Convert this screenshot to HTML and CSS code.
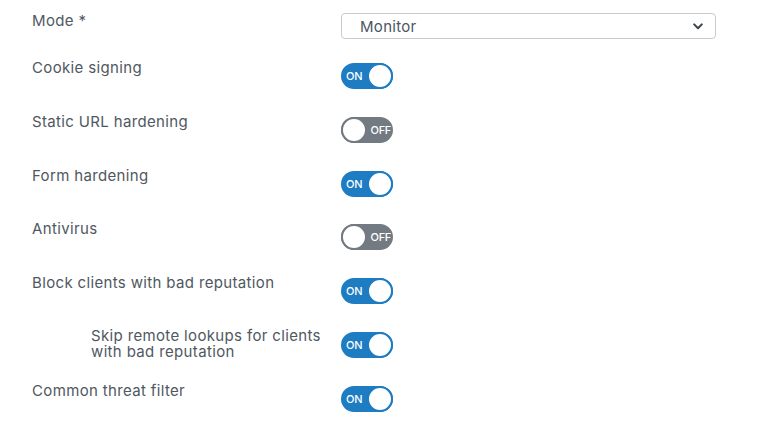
FILE: index.html
```html
<!DOCTYPE html>
<html lang="en">
<head>
<meta charset="utf-8">
<title>Settings</title>
<link rel="stylesheet" href="styles.css">
</head>
<body>
<div class="form">
  <div class="row row-mode">
    <div class="label">Mode *</div>
    <div class="select">
      <span class="select-text">Monitor</span>
      <svg class="chev" width="10" height="7" viewBox="0 0 10 7"><path d="M1.2 1.4 L5 5.2 L8.8 1.4" fill="none" stroke="#3b424a" stroke-width="2" stroke-linecap="round" stroke-linejoin="round"/></svg>
    </div>
  </div>
  <div class="row">
    <div class="label">Cookie signing</div>
    <div class="toggle on"><span class="tt">ON</span><span class="knob"></span></div>
  </div>
  <div class="row">
    <div class="label">Static URL hardening</div>
    <div class="toggle off"><span class="knob"></span><span class="tt">OFF</span></div>
  </div>
  <div class="row">
    <div class="label">Form hardening</div>
    <div class="toggle on"><span class="tt">ON</span><span class="knob"></span></div>
  </div>
  <div class="row">
    <div class="label">Antivirus</div>
    <div class="toggle off"><span class="knob"></span><span class="tt">OFF</span></div>
  </div>
  <div class="row">
    <div class="label">Block clients with bad reputation</div>
    <div class="toggle on"><span class="tt">ON</span><span class="knob"></span></div>
  </div>
  <div class="row">
    <div class="label sub">Skip remote lookups for clients with bad reputation</div>
    <div class="toggle on"><span class="tt">ON</span><span class="knob"></span></div>
  </div>
  <div class="row">
    <div class="label">Common threat filter</div>
    <div class="toggle on"><span class="tt">ON</span><span class="knob"></span></div>
  </div>
</div>
</body>
</html>
```
FILE: styles.css
```css
* { box-sizing: border-box; }
html, body { margin: 0; padding: 0; background: #ffffff; }
body {
  font-family: Inter, Roboto, "Liberation Sans", sans-serif;
  color: #4f5861;
  width: 757px;
  height: 426px;
  overflow: hidden;
}
.form { padding: 12px 0 0 32px; }
.row {
  display: grid;
  grid-template-columns: 309px 375px;
  height: 53.8px;
  align-items: start;
}
.row-mode { height: 47px; }
.label { font-size: 15px; line-height: 18px; letter-spacing: 0.35px; }
.label.sub { padding-left: 59px; padding-right: 12px; line-height: 16px; }
.select {
  margin-top: 1px;
  height: 26px;
  border: 1px solid #c6cbd1;
  border-radius: 4px;
  display: flex;
  align-items: center;
  justify-content: space-between;
  padding: 0 12px 0 18px;
}
.select-text { font-size: 15px; color: #4c5663; letter-spacing: 0.3px; }
.chev { display: block; }
.toggle {
  margin-top: 4px;
  width: 52px;
  height: 26px;
  border-radius: 13px;
  display: flex;
  align-items: center;
  justify-content: space-between;
}
.toggle.on { background: #1d7cc2; }
.toggle.off { background: #737a82; }
.knob {
  width: 26px;
  height: 26px;
  border-radius: 50%;
  background: #ffffff;
  border: 2px solid #1d7cc2;
}
.toggle.off .knob { border-color: #737a82; }
.tt {
  color: #ffffff;
  font-size: 11px;
  font-weight: 500;
  letter-spacing: -0.3px;
}
.toggle.on .tt { padding-left: 5px; }
.toggle.off .tt { padding-right: 2px; }
```
